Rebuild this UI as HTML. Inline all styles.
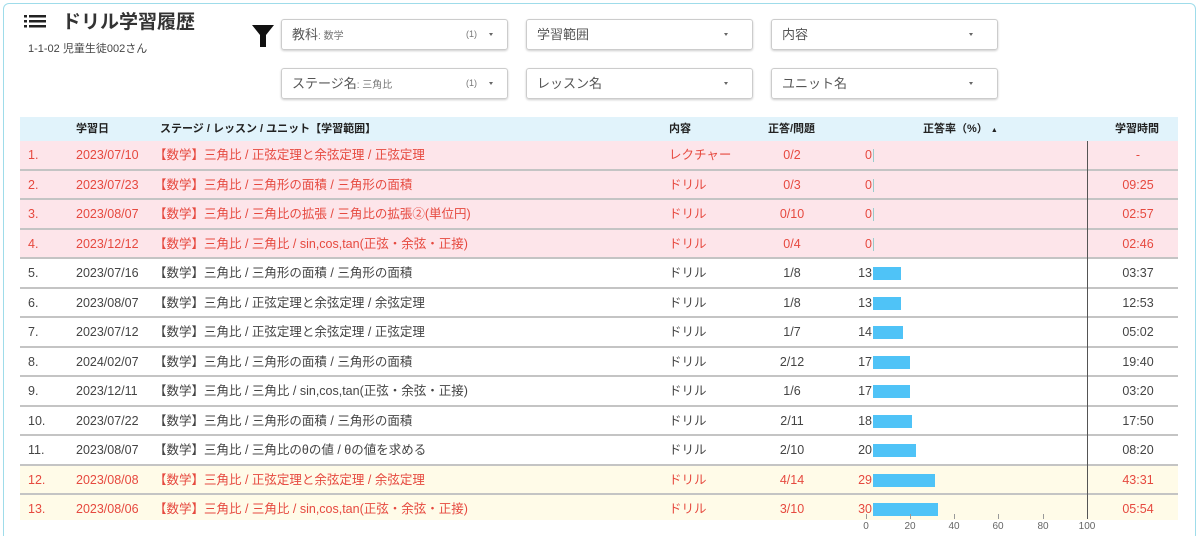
<!DOCTYPE html>
<html style="width:1200px;height:536px;overflow:hidden"><head><meta charset="utf-8"><style>
*{margin:0;padding:0;box-sizing:border-box}
body{width:1200px;height:536px;overflow:hidden;background:#fff;font-family:"Liberation Sans","Noto Sans CJK JP",sans-serif;color:#444;position:relative}
.card{position:absolute;left:3px;top:3px;width:1193px;height:540px;border:1px solid #9fdcea;border-radius:6px}
.abs{position:absolute;white-space:nowrap;line-height:16px}
.sel{position:absolute;width:227px;height:31px;border:1px solid #ccc;border-radius:3px;box-shadow:0 1px 2px rgba(0,0,0,.2);font-size:13px;color:#555;padding:0 10px;line-height:29px}
.sel small{font-size:10px;color:#777}
.sel .c{position:absolute;right:30px;top:0;font-size:9px;color:#777}
.sel .a{position:absolute;right:24px;top:13px;width:0;height:0;border-left:2.5px solid transparent;border-right:2.5px solid transparent;border-top:3px solid #666}
.sel .a2{position:absolute;right:14px;top:13px;width:0;height:0;border-left:2.5px solid transparent;border-right:2.5px solid transparent;border-top:3px solid #666}
.hdr{position:absolute;left:20px;top:117px;width:1158px;height:24px;background:#e1f3fb;font-size:11px;font-weight:bold;color:#222}
.row{position:absolute;left:20px;width:1158px;height:29.5px;border-bottom:2px solid #c4c4c4;font-size:12.5px}
.row span{position:absolute;top:6px;white-space:nowrap;line-height:16px}
.bar{position:absolute;left:853px;top:8px;height:13px;background:#4fc3f7}
.tick{position:absolute;top:514px;width:1px;height:5px;background:#999}
.tl{position:absolute;top:521px;font-size:10px;color:#666;width:30px;text-align:center;line-height:12px}
</style></head><body>
<div class="card"></div>
<svg class="abs" style="left:24px;top:15px" width="22" height="13"><g fill="#222"><rect x="0" y="0" width="3" height="2.5"/><rect x="0" y="5" width="3" height="2.5"/><rect x="0" y="10" width="3" height="2.5"/><rect x="5" y="0" width="17" height="2.5"/><rect x="5" y="5" width="17" height="2.5"/><rect x="5" y="10" width="17" height="2.5"/></g></svg>
<div class="abs" style="left:62px;top:11px;font-size:19px;font-weight:bold;color:#333;line-height:24px">ドリル学習履歴</div>
<div class="abs" style="left:28px;top:41px;font-size:11px;color:#444">1-1-02 児童生徒002さん</div>
<svg class="abs" style="left:252px;top:25px" width="22" height="22"><path d="M0 0H22L14 10V22H8V10Z" fill="#111"/></svg>
<div class="sel" style="left:281px;top:19px">教科<small>: 数学</small><span class="c">(1)</span><span class="a2"></span></div>
<div class="sel" style="left:526px;top:19px">学習範囲<span class="a"></span></div>
<div class="sel" style="left:771px;top:19px">内容<span class="a"></span></div>
<div class="sel" style="left:281px;top:68px">ステージ名<small>: 三角比</small><span class="c">(1)</span><span class="a2"></span></div>
<div class="sel" style="left:526px;top:68px">レッスン名<span class="a"></span></div>
<div class="sel" style="left:771px;top:68px">ユニット名<span class="a"></span></div>
<div class="hdr">
<span class="abs" style="left:56px;top:4px">学習日</span>
<span class="abs" style="left:140px;top:4px">ステージ / レッスン / ユニット【学習範囲】</span>
<span class="abs" style="left:649px;top:4px">内容</span>
<span class="abs" style="left:748px;top:4px">正答/問題</span>
<span class="abs" style="left:903px;top:4px">正答率（%） <span style="font-size:7px">▲</span></span>
<span class="abs" style="left:1095px;top:4px">学習時間</span>
</div>
<div id="rows"></div>
<div class="abs" style="left:1087px;top:141px;width:1px;height:378px;background:#555"></div>
<div class="tick" style="left:866px"></div><div class="tick" style="left:910px"></div><div class="tick" style="left:954px"></div><div class="tick" style="left:998px"></div><div class="tick" style="left:1043px"></div>
<div class="tl" style="left:851px">0</div><div class="tl" style="left:895px">20</div><div class="tl" style="left:939px">40</div><div class="tl" style="left:983px">60</div><div class="tl" style="left:1028px">80</div><div class="tl" style="left:1072px">100</div>
<script>
var d=[["2023/07/10","三角比 / 正弦定理と余弦定理 / 正弦定理","レクチャー","0/2",0,"-","p"],
["2023/07/23","三角比 / 三角形の面積 / 三角形の面積","ドリル","0/3",0,"09:25","p"],
["2023/08/07","三角比 / 三角比の拡張 / 三角比の拡張②(単位円)","ドリル","0/10",0,"02:57","p"],
["2023/12/12","三角比 / 三角比 / sin,cos,tan(正弦・余弦・正接)","ドリル","0/4",0,"02:46","p"],
["2023/07/16","三角比 / 三角形の面積 / 三角形の面積","ドリル","1/8",13,"03:37","w"],
["2023/08/07","三角比 / 正弦定理と余弦定理 / 余弦定理","ドリル","1/8",13,"12:53","w"],
["2023/07/12","三角比 / 正弦定理と余弦定理 / 正弦定理","ドリル","1/7",14,"05:02","w"],
["2024/02/07","三角比 / 三角形の面積 / 三角形の面積","ドリル","2/12",17,"19:40","w"],
["2023/12/11","三角比 / 三角比 / sin,cos,tan(正弦・余弦・正接)","ドリル","1/6",17,"03:20","w"],
["2023/07/22","三角比 / 三角形の面積 / 三角形の面積","ドリル","2/11",18,"17:50","w"],
["2023/08/07","三角比 / 三角比のθの値 / θの値を求める","ドリル","2/10",20,"08:20","w"],
["2023/08/08","三角比 / 正弦定理と余弦定理 / 余弦定理","ドリル","4/14",29,"43:31","y"],
["2023/08/06","三角比 / 三角比 / sin,cos,tan(正弦・余弦・正接)","ドリル","3/10",30,"05:54","y"]];
var h="";d.forEach(function(r,i){var bg=r[6]=="p"?"#fde5ea":r[6]=="y"?"#fffbe8":"#fff";var c=r[6]=="w"?"#444":"#e6493f";
var top=141+i*29.5;var extra=i==12?"height:25px;border-bottom:none;":"";
h+='<div class="row" style="top:'+top+'px;background:'+bg+';color:'+c+';'+extra+'"><span style="left:8px">'+(i+1)+'.</span><span style="left:56px">'+r[0]+'</span><span style="left:134px">【数学】'+r[1]+'</span><span style="left:649px">'+r[2]+'</span><span style="left:752px;width:40px;text-align:center">'+r[3]+'</span><span style="left:820px;width:32px;text-align:right">'+r[4]+'</span>'+(r[4]?'<div class="bar" style="width:'+(r[4]*2.15)+'px"></div>':'<div class="bar" style="width:1px;background:#9cc"></div>')+'<span style="left:1098px;width:40px;text-align:center">'+r[5]+'</span></div>';});
document.getElementById("rows").innerHTML=h;
</script>
</body></html>
